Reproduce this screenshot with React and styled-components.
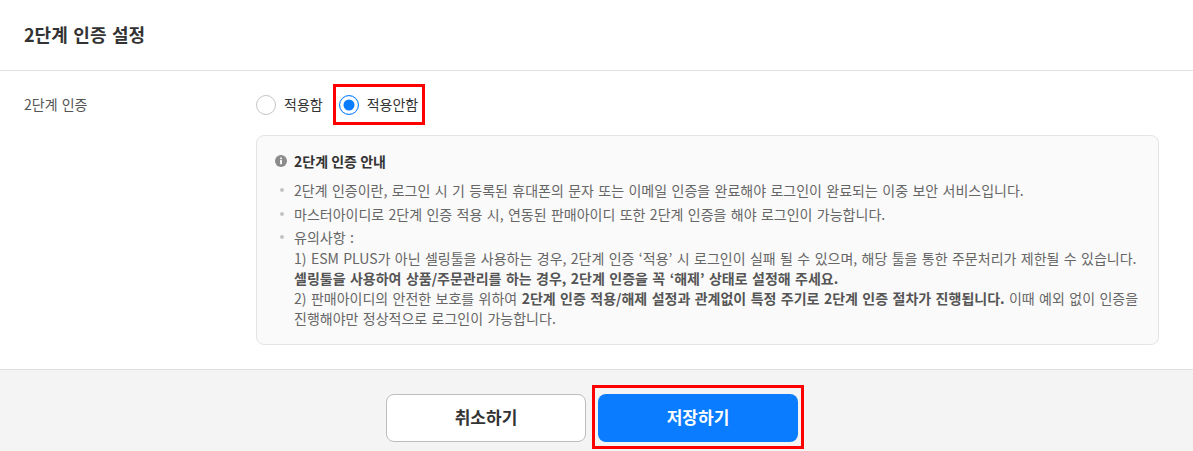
import React from 'react'
import styled, { createGlobalStyle } from 'styled-components'

const GlobalStyle = createGlobalStyle`
    html, body {
        margin: 0;
        padding: 0;
        background: #fff;
        font-family: "Noto Sans CJK KR", "Noto Sans", sans-serif;
    }
`

function Radio({ checked, children }) {
    return (
        <RadioLabel>
            <RadioCircle $checked={checked} />
            <RadioText>{children}</RadioText>
        </RadioLabel>
    )
}

function App() {
    return (
        <Wrapper>
            <GlobalStyle />
            <Header>2단계 인증 설정</Header>
            <Body>
                <RowTitle>2단계 인증</RowTitle>
                <RowContent>
                    <RadioGroup>
                        <Radio>적용함</Radio>
                        <Highlight>
                            <Radio checked>적용안함</Radio>
                        </Highlight>
                    </RadioGroup>
                    <InfoBox>
                        <InfoTitle>
                            <svg width="12" height="12" viewBox="0 0 12 12">
                                <circle cx="6" cy="6" r="6" fill="#8c8c8c" />
                                <rect x="5.1" y="5" width="1.8" height="4.2" fill="#fff" />
                                <rect x="5.1" y="2.6" width="1.8" height="1.6" fill="#fff" />
                            </svg>
                            2단계 인증 안내
                        </InfoTitle>
                        <InfoList>
                            <InfoItem>2단계 인증이란, 로그인 시 기 등록된 휴대폰의 문자 또는 이메일 인증을 완료해야 로그인이 완료되는 이중 보안 서비스입니다.</InfoItem>
                            <InfoItem>마스터아이디로 2단계 인증 적용 시, 연동된 판매아이디 또한 2단계 인증을 해야 로그인이 가능합니다.</InfoItem>
                            <InfoItem>
                                유의사항 :<br />
                                1) ESM PLUS가 아닌 셀링툴을 사용하는 경우, 2단계 인증 ‘적용’ 시 로그인이 실패 될 수 있으며, 해당 툴을 통한 주문처리가 제한될 수 있습니다.<br />
                                <strong>셀링툴을 사용하여 상품/주문관리를 하는 경우, 2단계 인증을 꼭 ‘해제’ 상태로 설정해 주세요.</strong><br />
                                2) 판매아이디의 안전한 보호를 위하여 <strong>2단계 인증 적용/해제 설정과 관계없이 특정 주기로 2단계 인증 절차가 진행됩니다.</strong> 이때 예외 없이 인증을 진행해야만 정상적으로 로그인이 가능합니다.
                            </InfoItem>
                        </InfoList>
                    </InfoBox>
                </RowContent>
            </Body>
            <Footer>
                <CancelButton>취소하기</CancelButton>
                <SaveHighlight>
                    <SaveButton>저장하기</SaveButton>
                </SaveHighlight>
            </Footer>
        </Wrapper>
    )
}

export default App

const Wrapper = styled.div`
    width: 1193px;
    height: 451px;
    overflow: hidden;
    display: flex;
    flex-direction: column;
`

const Header = styled.div`
    height: 68px;
    padding: 0 0 2px 24px;
    display: flex;
    align-items: center;
    border-bottom: 1px solid #e0e0e0;
    font-size: 18px;
    font-weight: 700;
    word-spacing: 1.5px;
    color: #333;
`

const Body = styled.div`
    height: 298px;
    display: grid;
    grid-template-columns: 232px 903px;
    padding-left: 24px;
`

const RowTitle = styled.div`
    padding-top: 23px;
    font-size: 14px;
    line-height: 20px;
    word-spacing: 1px;
    color: #555;
`

const RowContent = styled.div`
    padding-top: 13px;
`

const RadioGroup = styled.div`
    display: flex;
    align-items: center;
    gap: 10px;
    height: 41px;
    margin-bottom: 10px;
`

const Highlight = styled.div`
    display: flex;
    align-items: center;
    box-sizing: border-box;
    height: 41px;
    padding: 0 4px 0 3px;
    border: 3px solid #f00;
`

const RadioLabel = styled.label`
    display: inline-flex;
    align-items: center;
    gap: 8px;
    font-size: 14px;
    color: #333;
`

const RadioText = styled.span`
    padding-bottom: 2px;
`

const RadioCircle = styled.span`
    display: block;
    box-sizing: border-box;
    width: 20px;
    height: 20px;
    border-radius: 50%;
    background: #fff;
    border: 1px solid ${p => (p.$checked ? '#0a7cff' : '#c4c4c4')};
    box-shadow: ${p => (p.$checked ? 'inset 0 0 0 3.5px #fff, inset 0 0 0 10px #0a7cff' : 'none')};
`

const InfoBox = styled.div`
    box-sizing: border-box;
    height: 210px;
    padding: 15px 18px 16px;
    background: #fafafa;
    border: 1px solid #e4e4e4;
    border-radius: 8px;
`

const InfoTitle = styled.div`
    display: flex;
    align-items: center;
    gap: 7px;
    font-size: 14px;
    line-height: 20px;
    font-weight: 700;
    color: #333;
    margin-bottom: 9px;
`

const InfoList = styled.ul`
    list-style: none;
    margin: 0;
    padding: 0;
`

const InfoItem = styled.li`
    position: relative;
    padding-left: 19px;
    margin-bottom: 3.5px;
    font-size: 14px;
    line-height: 20.2px;
    word-spacing: 1.25px;
    color: #666;

    &::before {
        content: '';
        position: absolute;
        left: 5px;
        top: 8px;
        width: 4px;
        height: 4px;
        border-radius: 50%;
        background: #c4c4c4;
    }

    strong {
        font-weight: 700;
        color: #555;
    }
`

const Footer = styled.div`
    flex: 1;
    display: flex;
    justify-content: center;
    align-items: flex-start;
    gap: 6px;
    padding: 15px 3px 0 0;
    background: #f4f4f4;
    border-top: 1px solid #e0e0e0;
`

const CancelButton = styled.button`
    box-sizing: border-box;
    width: 200px;
    height: 48px;
    margin-top: 9px;
    padding: 0 0 3px;
    background: #fff;
    border: 1px solid #bdbdbd;
    border-radius: 8px;
    font-family: inherit;
    font-size: 17px;
    font-weight: 700;
    color: #333;
`

const SaveHighlight = styled.div`
    box-sizing: border-box;
    width: 212px;
    height: 64px;
    padding: 6px 3px 0;
    border: 3px solid #f00;
    display: flex;
    justify-content: center;
`

const SaveButton = styled.button`
    width: 200px;
    height: 48px;
    padding: 0 0 3px;
    background: #0a7cff;
    border: 0;
    border-radius: 8px;
    font-family: inherit;
    font-size: 17px;
    font-weight: 700;
    color: #fff;
`
